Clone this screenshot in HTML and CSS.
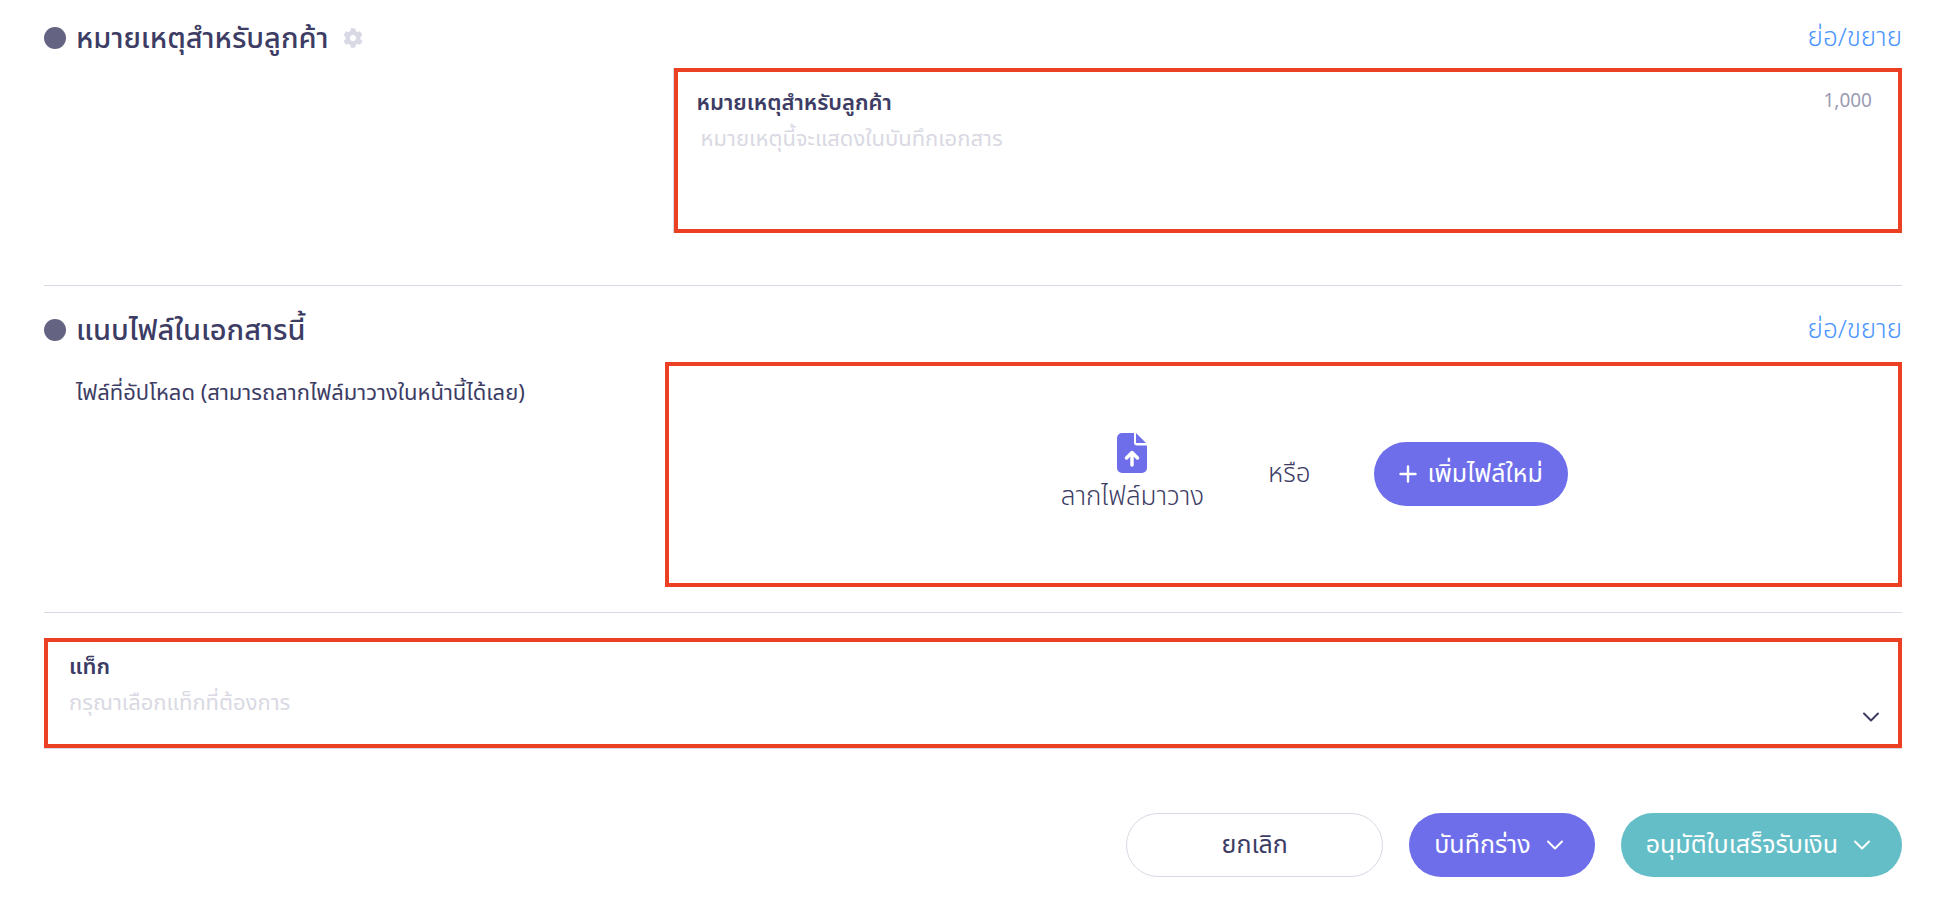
FILE: index.html
```
<!doctype html>
<html lang="th">
<head>
	<meta charset="utf-8">
	<title>หมายเหตุและไฟล์แนบ</title>
	<link rel="stylesheet" href="styles.css">
</head>
<body>
<form class="page">

	<section class="section note">
		<div class="section-head">
			<span class="dot"></span>
			<h2>หมายเหตุสำหรับลูกค้า</h2>
			<button type="button" class="gear" aria-label="ตั้งค่า">
				<svg viewBox="0 0 512 512" width="20" height="20"><path fill="currentColor" d="M487.400 315.700l-42.600-24.600c4.300-23.200 4.300-47 0-70.200l42.600-24.600c4.900-2.800 7.100-8.600 5.500-14-11.100-35.600-30-67.800-54.700-94.600-3.800-4.100-10-5.100-14.800-2.300L380.800 110c-17.900-15.400-38.500-27.300-60.800-35.100V25.800c0-5.600-3.900-10.500-9.400-11.700-36.700-8.200-74.300-7.800-109.200 0-5.500 1.200-9.400 6.100-9.400 11.700V75c-22.200 7.900-42.800 19.800-60.800 35.100L88.700 85.500c-4.900-2.800-11-1.900-14.800 2.300-24.700 26.700-43.600 58.900-54.700 94.600-1.700 5.400.6 11.200 5.500 14L67.300 221c-4.300 23.200-4.300 47 0 70.200l-42.600 24.600c-4.900 2.800-7.100 8.600-5.500 14 11.100 35.600 30 67.800 54.700 94.600 3.800 4.100 10 5.100 14.800 2.300l42.600-24.600c17.900 15.400 38.500 27.300 60.800 35.100v49.200c0 5.600 3.900 10.500 9.400 11.700 36.700 8.200 74.300 7.800 109.200 0 5.500-1.200 9.400-6.100 9.400-11.700v-49.200c22.200-7.900 42.800-19.800 60.800-35.100l42.600 24.600c4.900 2.800 11 1.900 14.800-2.300 24.700-26.700 43.600-58.900 54.700-94.600 1.500-5.500-.7-11.300-5.600-14.100zM256 336c-44.100 0-80-35.900-80-80s35.900-80 80-80 80 35.900 80 80-35.900 80-80 80z"/></svg>
			</button>
			<a class="toggle" href="#note">ย่อ/ขยาย</a>
		</div>
		<div class="section-body">
			<div class="frame note-field">
				<div class="field-head">
					<label for="note">หมายเหตุสำหรับลูกค้า</label>
					<span class="counter">1,000</span>
				</div>
				<textarea id="note" maxlength="1000" placeholder="หมายเหตุนี้จะแสดงในบันทึกเอกสาร"></textarea>
			</div>
		</div>
	</section>

	<section class="section attach">
		<div class="section-head">
			<span class="dot"></span>
			<h2>แนบไฟล์ในเอกสารนี้</h2>
			<a class="toggle" href="#dropzone">ย่อ/ขยาย</a>
		</div>
		<div class="section-body">
			<p class="hint">ไฟล์ที่อัปโหลด (สามารถลากไฟล์มาวางในหน้านี้ได้เลย)</p>
			<div class="frame dropzone" id="dropzone">
				<div class="drop-target">
					<svg viewBox="0 0 30 40" width="30" height="40">
						<path fill="currentColor" d="M5 0h12v9.500a3 3 0 0 0 3 3h10V35a5 5 0 0 1-5 5H5a5 5 0 0 1-5-5V5a5 5 0 0 1 5-5z"/>
						<path fill="currentColor" d="M19 0l10 10H19z"/>
						<path fill="none" stroke="#fff" stroke-width="3.500" stroke-linecap="round" stroke-linejoin="round" d="M15 32V20M9.500 25l5.500-5.500 5.500 5.500"/>
					</svg>
					<span>ลากไฟล์มาวาง</span>
				</div>
				<span>หรือ</span>
				<button type="button" class="btn btn-primary btn-add">
					<svg viewBox="0 0 18 18" width="18" height="18"><path fill="none" stroke="currentColor" stroke-width="2.400" stroke-linecap="round" d="M9 1.500v15M1.500 9h15"/></svg>
					<span>เพิ่มไฟล์ใหม่</span>
				</button>
			</div>
		</div>
	</section>

	<section class="section tags">
		<div class="frame tag-field">
			<label for="tag">แท็ก</label>
			<select id="tag">
				<option value="">กรุณาเลือกแท็กที่ต้องการ</option>
			</select>
			<svg class="chevron" viewBox="0 0 16 10" width="16" height="10"><path fill="none" stroke="currentColor" stroke-width="2" stroke-linecap="round" stroke-linejoin="round" d="M1 1.500l7 7 7-7"/></svg>
		</div>
	</section>

	<div class="actions">
		<button type="button" class="btn btn-cancel">ยกเลิก</button>
		<button type="button" class="btn btn-primary btn-menu">
			<span>บันทึกร่าง</span>
			<svg viewBox="0 0 16 10" width="16" height="10"><path fill="none" stroke="currentColor" stroke-width="2" stroke-linecap="round" stroke-linejoin="round" d="M1 1.500l7 7 7-7"/></svg>
		</button>
		<button type="submit" class="btn btn-approve btn-menu">
			<span>อนุมัติใบเสร็จรับเงิน</span>
			<svg viewBox="0 0 16 10" width="16" height="10"><path fill="none" stroke="currentColor" stroke-width="2" stroke-linecap="round" stroke-linejoin="round" d="M1 1.500l7 7 7-7"/></svg>
		</button>
	</div>

</form>
</body>
</html>
```
FILE: styles.css
```
* {
	box-sizing: border-box;
}

body {
	margin: 0;
	background: #fff;
	color: #3c3c64;
	font-family: "Noto Sans Thai", "Noto Sans", sans-serif;
	font-size: 26px;
	font-weight: 300;
	line-height: 36px;
}

button, select, textarea {
	font: inherit;
	color: inherit;
	margin: 0;
}

svg {
	display: block;
	flex: none;
}

.page {
	padding: 0 44px;
}

/* sections */
.section {
	border-bottom: 1px solid #d9d9e6;
}

.note {
	padding: 16px 0 52px;
}

.attach {
	padding: 22px 0 25px;
}

.tags {
	padding-top: 25px;
	border-bottom: 0;
}

.section-head {
	display: flex;
	align-items: center;
	height: 44px;
}

.section-head h2 {
	margin: 0 14px 0 10px;
	padding-top: 2px;
	font-size: 29px;
	font-weight: 500;
}

.dot {
	width: 22px;
	height: 22px;
	border-radius: 50%;
	background: #646482;
}

.gear {
	padding: 0;
	border: 0;
	background: none;
	color: #d9d9e6;
	cursor: pointer;
}

.toggle {
	margin-left: auto;
	color: #4b96ff;
	text-decoration: none;
}

.section-body {
	display: grid;
	grid-template-columns: 33.4% 1fr;
	margin-top: 8px;
}

.attach .section-body {
	margin-top: 10px;
}

.frame {
	border: 4px solid #eb4023;
}

/* note */
.note-field {
	grid-column: 2;
	margin-left: 9px;
	padding: 16px 26px 8px 19px;
	box-shadow: -1px 0 #d9d9e6;
}

.field-head {
	display: flex;
	justify-content: space-between;
	line-height: 32px;
}

label {
	font-size: 22px;
	font-weight: 600;
}

.counter {
	font-size: 19px;
	font-weight: 400;
	line-height: 28px;
	color: #9b9bb4;
}

textarea {
	display: block;
	width: 100%;
	height: 101px;
	padding: 2px 4px;
	border: 0;
	outline: 0;
	resize: none;
	background: none;
	font-size: 22px;
	font-weight: 400;
	line-height: 36px;
}

textarea::placeholder {
	color: #d9d9e3;
}

/* attachments */
.hint {
	margin: 14px 0 0 32px;
	font-size: 22px;
	font-weight: 400;
	line-height: 36px;
}

.dropzone {
	display: flex;
	align-items: center;
	justify-content: center;
	gap: 64px;
	height: 225px;
	padding: 0 0 2px 62px;
}

.drop-target {
	display: flex;
	flex-direction: column;
	align-items: center;
	gap: 6px;
}

.drop-target svg {
	color: #6e6eeb;
}

/* tags */
.tag-field {
	position: relative;
	padding: 8px 18px 10px 21px;
	box-shadow: 0 1px #d9d9e6;
}

.tag-field label {
	display: block;
	line-height: 36px;
}

.tag-field select {
	display: block;
	width: 100%;
	height: 48px;
	padding: 0 0 12px;
	border: 0;
	outline: 0;
	appearance: none;
	background: none;
	color: #d9d9e3;
	font-size: 22px;
	font-weight: 400;
	line-height: 36px;
}

.chevron {
	position: absolute;
	right: 19px;
	bottom: 22px;
	pointer-events: none;
}

/* buttons */
.btn {
	display: flex;
	align-items: center;
	justify-content: center;
	gap: 16px;
	height: 64px;
	padding: 0 25px;
	border: 0;
	border-radius: 32px;
	color: #fff;
	font-size: 25px;
	font-weight: 400;
	cursor: pointer;
	white-space: nowrap;
}

.btn-primary {
	background: #6e6eeb;
}

.btn-add {
	gap: 10px;
}

.btn-menu {
	padding: 0 32px 0 25px;
}

.btn-approve {
	background: #64bec8;
}

.btn-cancel {
	width: 257px;
	border: 1px solid #d9d9e6;
	background: #fff;
	color: #3c3c64;
}

.actions {
	display: flex;
	justify-content: flex-end;
	gap: 26px;
	padding: 65px 0 26px;
}
```
